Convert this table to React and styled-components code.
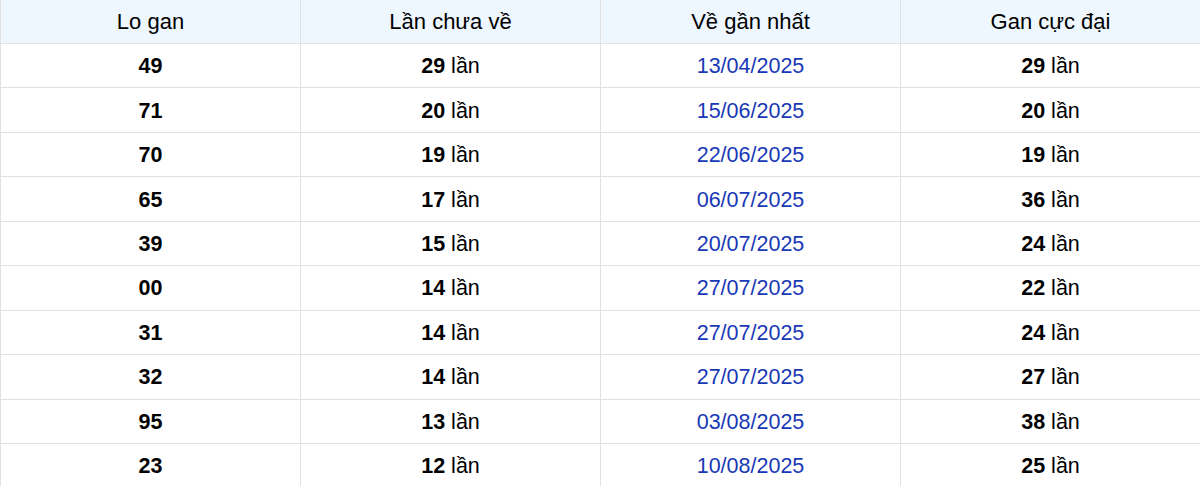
import React from 'react';
import styled, { createGlobalStyle } from 'styled-components';

const GlobalStyle = createGlobalStyle`
  html, body {
    margin: 0;
    padding: 0;
    background: #fff;
    font-family: "Liberation Sans", Arial, sans-serif;
  }
`;

const Wrapper = styled.div`
  width: 1200px;
  overflow: hidden;
`;

const Table = styled.table`
  width: 1201px;
  border-collapse: collapse;
  table-layout: fixed;
  font-size: 21.5px;
  color: #000;
`;

const Th = styled.th`
  background: #eef6fe;
  border: 1px solid #e1e1e1;
  border-top: none;
  font-weight: normal;
  height: 43.5px;
  padding: 0 8px;
  box-sizing: border-box;
  font-size: 22px;
  text-align: center;
`;

const Td = styled.td`
  border: 1px solid #e1e1e1;
  height: 44.45px;
  padding: 2px 8px 0;
  box-sizing: border-box;
  text-align: center;
  color: ${(p) => (p.date ? '#1838b6' : '#000')};
`;

const Num = styled.b`
  font-weight: bold;
`;

const rows = [
  ['49', 29, '13/04/2025', 29],
  ['71', 20, '15/06/2025', 20],
  ['70', 19, '22/06/2025', 19],
  ['65', 17, '06/07/2025', 36],
  ['39', 15, '20/07/2025', 24],
  ['00', 14, '27/07/2025', 22],
  ['31', 14, '27/07/2025', 24],
  ['32', 14, '27/07/2025', 27],
  ['95', 13, '03/08/2025', 38],
  ['23', 12, '10/08/2025', 25],
];

const App = () => (
  <Wrapper>
    <GlobalStyle />
    <Table>
      <thead>
        <tr>
          <Th>Lo gan</Th>
          <Th>Lần chưa về</Th>
          <Th>Về gần nhất</Th>
          <Th>Gan cực đại</Th>
        </tr>
      </thead>
      <tbody>
        {rows.map((r, k) => (
          <tr key={`row_${k}`}>
            <Td><Num>{r[0]}</Num></Td>
            <Td><Num>{r[1]}</Num> lần</Td>
            <Td date>{r[2]}</Td>
            <Td><Num>{r[3]}</Num> lần</Td>
          </tr>
        ))}
      </tbody>
    </Table>
  </Wrapper>
);

export default App;
